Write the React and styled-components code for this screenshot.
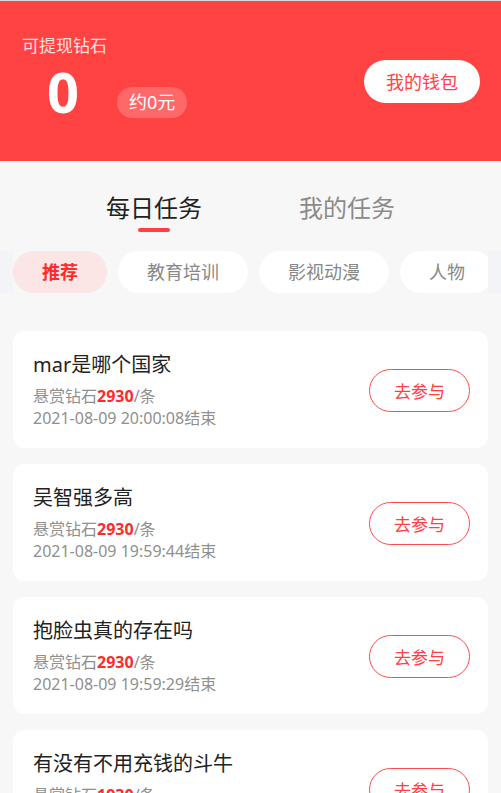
import React from 'react';
import styled, { createGlobalStyle } from 'styled-components';

const GlobalStyle = createGlobalStyle`
  html, body {
    margin: 0;
    padding: 0;
    background: #f7f7f7;
    font-family: "Noto Sans", "Noto Sans CJK SC", sans-serif;
  }
  * { box-sizing: border-box; }
`;

const Page = styled.div`
  width: 501px;
  min-height: 100vh;
  background: #f7f7f7;
  border-top: 1px solid #d8d8d8;
`;

const Header = styled.div`
  height: 160px;
  background: #ff4343;
  display: flex;
  align-items: center;
  justify-content: space-between;
  padding: 0 21px 0 22px;
`;

const Balance = styled.div`
  display: flex;
  flex-direction: column;
  margin-top: -4px;
`;

const BalanceLabel = styled.div`
  font-size: 17px;
  line-height: 22px;
  color: rgba(255, 255, 255, 0.85);
`;

const BalanceRow = styled.div`
  display: flex;
  align-items: flex-end;
`;

const Amount = styled.div`
  font-size: 56px;
  font-weight: 700;
  line-height: 64px;
  color: #fff;
  margin-left: 25px;
  margin-top: 2px;
`;

const Approx = styled.div`
  margin-left: 38px;
  margin-bottom: 5px;
  height: 31px;
  padding: 0 12px;
  border-radius: 16px;
  background: rgba(255, 255, 255, 0.2);
  color: #fff;
  font-size: 18px;
  line-height: 31px;
`;

const WalletButton = styled.button`
  height: 43px;
  padding: 0 22px;
  border: none;
  border-radius: 22px;
  background: #fff;
  color: #ff4343;
  font-family: inherit;
  font-size: 18px;
  margin-top: 0;
`;

const Tabs = styled.div`
  display: flex;
  justify-content: center;
  gap: 97px;
  padding-top: 29px;
  height: 90px;
`;

const Tab = styled.div`
  position: relative;
  font-size: 24px;
  line-height: 36px;
  height: 44px;
  color: ${p => (p.active ? '#222' : '#8a8a8a')};

  &::after {
    content: '';
    display: ${p => (p.active ? 'block' : 'none')};
    position: absolute;
    left: 50%;
    bottom: 2px;
    width: 32px;
    height: 4px;
    margin-left: -16px;
    border-radius: 2px;
    background: #ff4040;
  }
`;

const ChipBar = styled.div`
  background: #f2f4f7;
  padding: 0 13px;
`;

const ChipScroll = styled.div`
  display: flex;
  gap: 11px;
  overflow: hidden;
  background: #f7f7f7;
`;

const Chip = styled.div`
  flex: none;
  height: 42px;
  line-height: 42px;
  padding: 0 29px;
  border-radius: 21px;
  font-size: 18px;
  white-space: nowrap;
  background: ${p => (p.active ? '#fbe5e5' : '#fff')};
  color: ${p => (p.active ? '#ff2a2a' : '#888')};
  font-weight: ${p => (p.active ? 700 : 400)};
`;

const List = styled.div`
  display: flex;
  flex-direction: column;
  gap: 16px;
  padding: 38px 13px 20px;
`;

const Card = styled.div`
  display: flex;
  align-items: center;
  justify-content: space-between;
  background: #fff;
  border-radius: 12px;
  padding: 20px 18px 19px 20px;
`;

const Info = styled.div`
  display: flex;
  flex-direction: column;
`;

const Title = styled.div`
  font-size: 20px;
  line-height: 28px;
  color: #222;
  margin-bottom: 6px;
`;

const Meta = styled.div`
  font-size: 16px;
  line-height: 22px;
  color: #8f8f8f;

  b {
    color: #ff2a2a;
    font-weight: 700;
  }
`;

const JoinButton = styled.button`
  width: 101px;
  height: 43px;
  border: 1px solid #ff4a4a;
  border-radius: 22px;
  background: #fff;
  color: #ff4040;
  font-family: inherit;
  font-size: 17px;
`;

const categories = ['推荐', '教育培训', '影视动漫', '人物', '生活'];

const tasks = [
  { title: 'mar是哪个国家', reward: 2930, end: '2021-08-09 20:00:08' },
  { title: '吴智强多高', reward: 2930, end: '2021-08-09 19:59:44' },
  { title: '抱脸虫真的存在吗', reward: 2930, end: '2021-08-09 19:59:29' },
  { title: '有没有不用充钱的斗牛', reward: 1930, end: '2021-08-09 19:59:10' },
];

export default function App() {
  return (
    <Page>
      <GlobalStyle />
      <Header>
        <Balance>
          <BalanceLabel>可提现钻石</BalanceLabel>
          <BalanceRow>
            <Amount>0</Amount>
            <Approx>约0元</Approx>
          </BalanceRow>
        </Balance>
        <WalletButton>我的钱包</WalletButton>
      </Header>
      <Tabs>
        <Tab active>每日任务</Tab>
        <Tab>我的任务</Tab>
      </Tabs>
      <ChipBar>
        <ChipScroll>
          {categories.map((c, i) => (
            <Chip key={c} active={i === 0}>{c}</Chip>
          ))}
        </ChipScroll>
      </ChipBar>
      <List>
        {tasks.map(t => (
          <Card key={t.title}>
            <Info>
              <Title>{t.title}</Title>
              <Meta>悬赏钻石<b>{t.reward}</b>/条</Meta>
              <Meta>{t.end}结束</Meta>
            </Info>
            <JoinButton>去参与</JoinButton>
          </Card>
        ))}
      </List>
    </Page>
  );
}
